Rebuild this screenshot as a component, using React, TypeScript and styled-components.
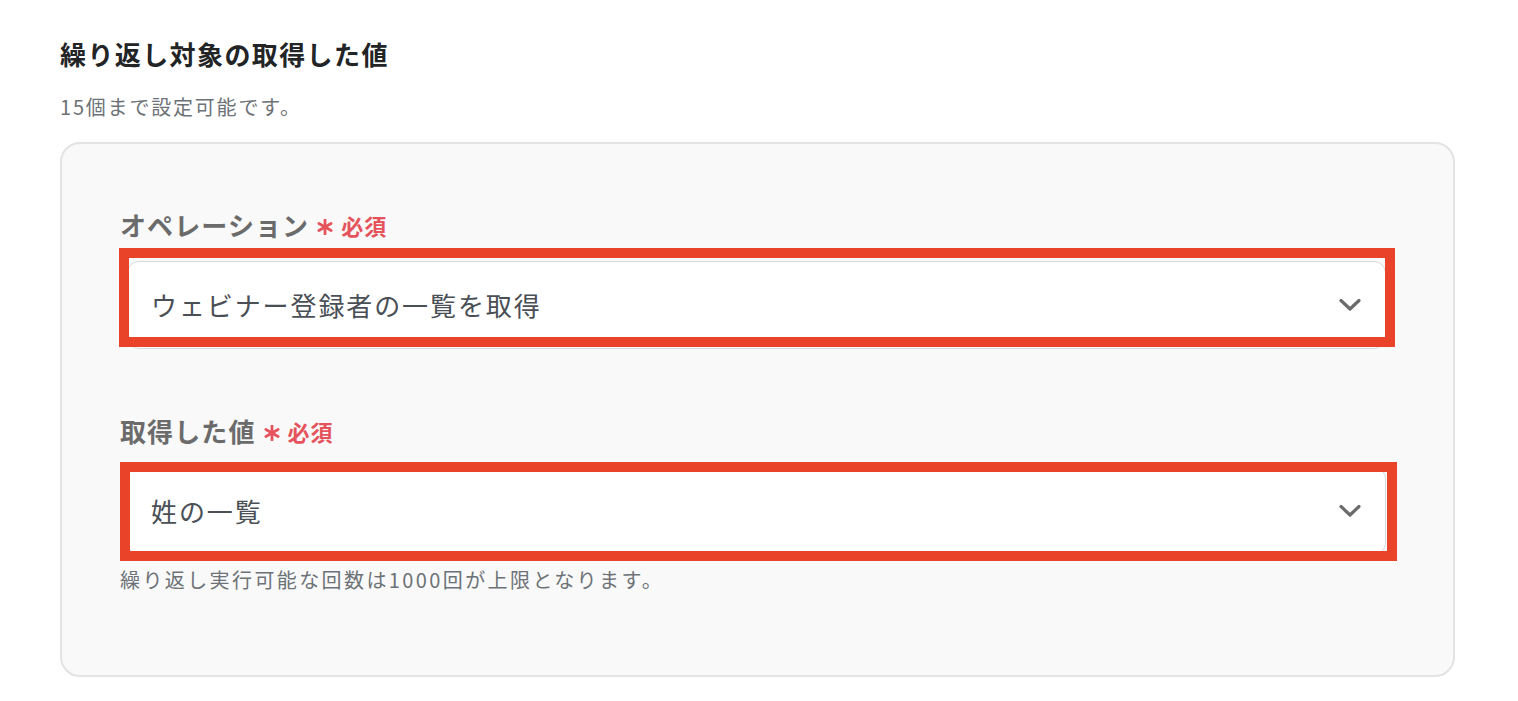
import React from "react";
import styled, { createGlobalStyle } from "styled-components";

const GlobalStyle = createGlobalStyle`
  html, body {
    margin: 0;
    padding: 0;
    background: #ffffff;
  }
  body {
    font-family: "Noto Sans CJK JP", "Noto Sans", sans-serif;
    -webkit-font-smoothing: antialiased;
  }
  * { box-sizing: border-box; }
`;

const Page = styled.div`
  display: flex;
  flex-direction: column;
  padding: 36px 0 24px 60px;
  width: 1455px;
`;

const Title = styled.h2`
  margin: 0;
  font-size: 26px;
  line-height: 36px;
  font-weight: 700;
  letter-spacing: 1.4px;
  color: #222426;
`;

const Note = styled.p`
  margin: 22px 0 0;
  font-size: 20px;
  line-height: 26px;
  font-weight: 400;
  letter-spacing: 1.8px;
  color: #6d7277;
`;

const Card = styled.section`
  margin-top: 22px;
  display: flex;
  flex-direction: column;
  gap: 65px;
  padding: 64px 58px 82px 58px;
  background: #f9f9f9;
  border: 2px solid #e3e3e3;
  border-radius: 20px;
`;

const Field = styled.div`
  display: flex;
  flex-direction: column;
  gap: 19px;
`;

const LabelRow = styled.div`
  display: flex;
  align-items: center;
  gap: 8px;
  height: 34px;
`;

const LabelText = styled.span`
  font-size: 26px;
  line-height: 34px;
  font-weight: 700;
  letter-spacing: 1.1px;
  color: #6b6b6b;
`;

const Required = styled.span`
  display: flex;
  align-items: center;
  gap: 8px;
  color: #e5535c;
  font-weight: 700;
  font-size: 22px;
  line-height: 34px;
  letter-spacing: 1px;
`;

const Asterisk = styled.svg`
  width: 16px;
  height: 16px;
  margin-top: 4px;
`;

const SelectBlock = styled.div`
  display: flex;
  flex-direction: column;
  gap: 12px;
`;

const SelectFrame = styled.div`
  position: relative;
  margin: 0 9px 0 7px;
`;

const Select = styled.div`
  display: flex;
  align-items: center;
  justify-content: space-between;
  height: 88px;
  padding: 0 24px 2px 23px;
  background: #ffffff;
  border: 1.5px solid #d6d9dd;
  border-radius: 12px;
  font-size: 26px;
  letter-spacing: 1.9px;
  color: #4a4f56;
`;

const Chevron = styled.svg`
  width: 22px;
  height: 14px;
  flex: none;
  margin-top: 2px;
`;

const Highlight = styled.div<{ $t: number; $r: number; $b: number; $l: number }>`
  position: absolute;
  top: ${(p) => p.$t}px;
  right: ${(p) => p.$r}px;
  bottom: ${(p) => p.$b}px;
  left: ${(p) => p.$l}px;
  border: 10px solid #e9432a;
  pointer-events: none;
`;

const Helper = styled.p`
  margin: 0;
  font-size: 20px;
  line-height: 26px;
  letter-spacing: 2.4px;
  color: #6d7277;
`;

const AsteriskIcon = () => (
  <Asterisk viewBox="0 0 16 16" aria-hidden="true">
    <g stroke="#e5535c" strokeWidth="2.8" strokeLinecap="round">
      <line x1="8" y1="1" x2="8" y2="15" />
      <line x1="1.9" y1="4.5" x2="14.1" y2="11.5" />
      <line x1="1.9" y1="11.5" x2="14.1" y2="4.5" />
    </g>
  </Asterisk>
);

const ChevronIcon = () => (
  <Chevron viewBox="0 0 22 14" aria-hidden="true">
    <polyline
      points="2,2.5 11,11 20,2.5"
      fill="none"
      stroke="#6b6b6b"
      strokeWidth="3.2"
      strokeLinecap="round"
      strokeLinejoin="round"
    />
  </Chevron>
);

type Inset = { t: number; r: number; b: number; l: number };

const SelectField = ({
  label,
  value,
  inset,
  helper,
}: {
  label: string;
  value: string;
  inset: Inset;
  helper?: string;
}) => (
  <Field>
    <LabelRow>
      <LabelText>{label}</LabelText>
      <Required>
        <AsteriskIcon />
        必須
      </Required>
    </LabelRow>
    <SelectBlock>
      <SelectFrame>
        <Select>
          <span>{value}</span>
          <ChevronIcon />
        </Select>
        <Highlight $t={inset.t} $r={inset.r} $b={inset.b} $l={inset.l} />
      </SelectFrame>
      {helper && <Helper>{helper}</Helper>}
    </SelectBlock>
  </Field>
);

export default function App() {
  return (
    <>
      <GlobalStyle />
      <Page>
        <Title>繰り返し対象の取得した値</Title>
        <Note>15個まで設定可能です。</Note>
        <Card>
          <SelectField
            label="オペレーション"
            value="ウェビナー登録者の一覧を取得"
            inset={{ t: -13, r: -9, b: 2, l: -8 }}
          />
          <SelectField
            label="取得した値"
            value="姓の一覧"
            inset={{ t: -5, r: -11, b: -6, l: -7 }}
            helper="繰り返し実行可能な回数は1000回が上限となります。"
          />
        </Card>
      </Page>
    </>
  );
}
